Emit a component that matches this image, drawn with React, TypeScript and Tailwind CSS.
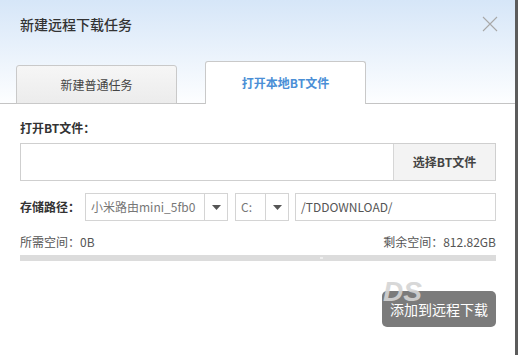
import React from "react";

const font = { fontFamily: '"Noto Sans CJK SC", "Noto Sans", sans-serif' };

function Caret() {
  return (
    <svg width="9" height="5" viewBox="0 0 9 5">
      <path d="M0 0 L9 0 L4.5 5 Z" fill="#555" />
    </svg>
  );
}

export default function App() {
  return (
    <div className="w-[518px] h-[355px] flex bg-white overflow-hidden" style={font}>
      <div className="w-[515px] h-full flex flex-col bg-white">
        {/* header */}
        <div className="h-[104px] flex flex-col bg-gradient-to-b from-[#d6e6f8] to-[#fdfeff] border-b border-[#c4c4c4]">
          <div className="h-[48px] flex items-center justify-between pl-5 pr-[17px]">
            <span className="text-[14px] leading-5 text-[#333] font-medium">新建远程下载任务</span>
            <svg width="16" height="16" viewBox="0 0 16 16">
              <path d="M1 1 L15 15 M15 1 L1 15" stroke="#a8a8a8" strokeWidth="1.1" />
            </svg>
          </div>
          <div className="flex-1 flex items-end pl-4 gap-[28px]">
            <div className="w-[161px] h-[39px] -mb-px rounded-t-[3px] border border-[#c9c9c9] bg-gradient-to-b from-[#f6f6f6] to-[#ececec] flex items-center justify-center text-[12px] text-[#444]">
              新建普通任务
            </div>
            <div className="w-[161px] h-[43px] -mb-px rounded-t-[3px] border border-b-0 border-[#c9c9c9] bg-white flex items-center justify-center text-[12px] font-bold text-[#4b8fd6]">
              打开本地BT文件
            </div>
          </div>
        </div>

        {/* body */}
        <div className="ml-5 w-[476px] flex flex-col">
          <div className="mt-[16px] h-[16px] leading-4 text-[12px] font-bold text-[#333]">打开BT文件：</div>
          <div className="mt-[7px] h-[38px] flex border border-[#cfcfcf]">
            <div className="flex-1 bg-white"></div>
            <div className="w-[102px] border-l border-[#d6d6d6] bg-[#f3f3f3] flex items-center justify-center text-[12px] font-bold text-[#444]">
              选择BT文件
            </div>
          </div>

          <div className="mt-[12px] h-[28px] flex items-center">
            <span className="w-[65px] text-[12px] font-bold text-[#333]">存储路径：</span>
            <div className="w-[143px] h-full flex border border-[#d4d4d4]">
              <div className="flex-1 flex items-center pl-[5px] text-[12px] text-[#777]">小米路由mini_5fb0</div>
              <div className="w-[23px] border-l border-[#d4d4d4] flex items-center justify-center">
                <Caret />
              </div>
            </div>
            <div className="ml-[7px] w-[54px] h-full flex border border-[#d4d4d4]">
              <div className="flex-1 flex items-center pl-[5px] text-[12px] text-[#777]">C:</div>
              <div className="w-[23px] border-l border-[#d4d4d4] flex items-center justify-center">
                <Caret />
              </div>
            </div>
            <div className="ml-[6px] flex-1 h-full flex items-center pl-[5px] border border-[#d4d4d4] text-[12px] text-[#555]">
              /TDDOWNLOAD/
            </div>
          </div>

          <div className="mt-[13px] h-[16px] flex justify-between items-center text-[12px] text-[#555] leading-4">
            <span>所需空间：0B</span>
            <span>剩余空间：812.82GB</span>
          </div>
          <div className="mt-[5px] h-[6px] bg-[#dcdcdc] relative">
            <div className="absolute left-[300px] top-[2px] w-[3px] h-[2px] bg-[#eeeeee]"></div>
          </div>

          <div className="mt-[30px] flex justify-end">
            <div className="relative w-[114px] h-[36px] rounded-[5px] bg-[#7b7b7b] flex items-center justify-center text-[14px] text-white overflow-visible">
              <span
                className="absolute left-[1px] top-[-13px] text-[28px] font-bold italic leading-none text-[#d4d4d4] opacity-90"
                style={{ fontFamily: '"Liberation Sans", sans-serif' }}
              >
                DS
              </span>
              <span className="relative">添加到远程下载</span>
            </div>
          </div>
        </div>
      </div>
      <div className="w-[3px] h-full bg-[#5c5c5c]"></div>
    </div>
  );
}
